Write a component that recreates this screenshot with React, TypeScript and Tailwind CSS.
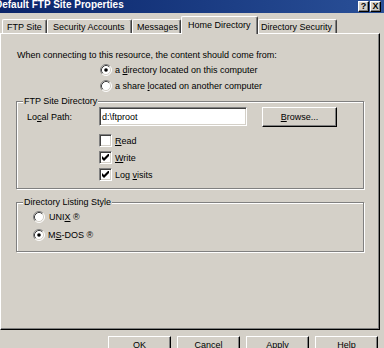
import React from "react";

function Radio({ checked }: { checked?: boolean }) {
  return (
    <svg width="12" height="12" viewBox="0 0 12 12" className="shrink-0">
      <circle cx="6" cy="6" r="5" fill="#fff" />
      <path d="M2.11 9.89A5.5 5.5 0 0 1 9.89 2.11" fill="none" stroke="#808080" />
      <path d="M9.89 2.11A5.5 5.5 0 0 1 2.11 9.89" fill="none" stroke="#fff" />
      <path d="M2.82 9.18A4.5 4.5 0 0 1 9.18 2.82" fill="none" stroke="#404040" />
      <path d="M9.18 2.82A4.5 4.5 0 0 1 2.82 9.18" fill="none" stroke="#d4d0c8" />
      {checked && <circle cx="6" cy="6" r="1.8" fill="#000" />}
    </svg>
  );
}

function Check({ checked }: { checked?: boolean }) {
  return (
    <div className="flex h-[13px] w-[13px] shrink-0 items-center justify-center border border-t-[#808080] border-l-[#808080] border-b-white border-r-white bg-white shadow-[inset_1px_1px_0_#404040,inset_-1px_-1px_0_#d4d0c8]">
      {checked && (
        <svg width="7" height="7" viewBox="0 0 7 7">
          <path d="M0 2L2 4L7 -1L7 2L2 7L0 5Z" fill="#000" />
        </svg>
      )}
    </div>
  );
}

const raised =
  "flex shrink-0 items-center justify-center border border-t-white border-l-white border-b-black border-r-black bg-[#d4d0c8] shadow-[inset_-1px_-1px_0_#808080]";

const bottomBtn =
  "flex h-[22px] w-[63px] shrink-0 items-start justify-center border border-t-white border-l-white border-b-black border-r-black bg-[#d4d0c8] pt-[2px] shadow-[inset_-1px_-1px_0_#808080]";

const tab =
  "flex h-[14px] items-center rounded-t-[2px] border-t border-l border-r border-t-white border-l-white border-r-[#404040] shadow-[inset_-1px_0_0_#808080]";

function U({ children }: { children: React.ReactNode }) {
  return <span className="underline underline-offset-[1px]">{children}</span>;
}

export default function App() {
  return (
    <div className="flex h-[348px] w-[384px] flex-col overflow-hidden bg-[#d4d0c8] font-['Liberation_Sans',Arial,sans-serif] text-[9px] leading-[12px] text-black">
      {/* title bar */}
      <div className="flex h-[13px] shrink-0 items-start justify-between bg-gradient-to-r from-[#0a246a] to-[#2a5098]">
        <span className="-ml-[5px] text-[10px] font-bold leading-[10px] text-white">
          Default FTP Site Properties
        </span>
        <div className="mr-[3px] mt-[1px] flex gap-[1px]">
          <div className={raised + " h-[11px] w-[11px] text-[9px] font-bold leading-none"}>?</div>
          <div className={raised + " h-[11px] w-[11px] text-[9px] font-bold leading-none"}>X</div>
        </div>
      </div>

      {/* tabs */}
      <div className="flex h-[20px] shrink-0 items-end pl-[2px]">
        <div className={tab + " w-[45px] pl-[4px]"}>FTP Site</div>
        <div className={tab + " w-[85px] pl-[5px]"}>Security Accounts</div>
        <div className={tab + " w-[49px] pl-[4px]"}>Messages</div>
        <div className="relative z-10 -mb-[1px] flex h-[18px] w-[77px] items-center rounded-t-[2px] border-t border-l border-r border-t-white border-l-white border-r-[#404040] bg-[#d4d0c8] pb-[1px] pl-[6px] shadow-[inset_-1px_0_0_#808080]">
          Home Directory
        </div>
        <div className={tab + " w-[79px] pl-[2px]"}>Directory Security</div>
      </div>

      {/* panel */}
      <div className="flex h-[297px] w-[380px] shrink-0 flex-col border border-t-white border-l-white border-b-black border-r-black shadow-[inset_-1px_-1px_0_#808080]">
        <p className="ml-[16px] mt-[15px] shrink-0">
          When connecting to this resource, the content should come from:
        </p>
        <div className="ml-[99px] mt-[3px] flex h-[12px] shrink-0 items-center gap-[3px]">
          <Radio checked />
          <span>
            a <U>d</U>irectory located on this computer
          </span>
        </div>
        <div className="ml-[99px] mt-[4px] flex h-[12px] shrink-0 items-center gap-[3px]">
          <Radio />
          <span>
            a share <U>l</U>ocated on another computer
          </span>
        </div>

        <fieldset className="ml-[15px] mt-[3px] h-[94px] w-[348px] shrink-0 border border-[#808080] shadow-[1px_1px_0_#fff,inset_1px_1px_0_#fff]">
          <legend className="ml-[6px] bg-[#d4d0c8] px-[1px] leading-[12px]">FTP Site Directory</legend>
          <div className="flex h-[20px] items-start pl-[10px]">
            <span className="w-[72px] self-center">
              Lo<U>c</U>al Path:
            </span>
            <div className="flex h-[19px] w-[148px] items-center border border-t-[#808080] border-l-[#808080] border-b-white border-r-white bg-white pl-[2px] shadow-[inset_1px_1px_0_#404040,inset_-1px_-1px_0_#d4d0c8]">
              d:\ftproot
            </div>
            <div className={raised + " ml-[15px] h-[20px] w-[75px]"}>
              <span>
                <U>B</U>rowse...
              </span>
            </div>
          </div>
          <div className="ml-[82px] mt-[7px] flex h-[13px] items-center gap-[3px]">
            <Check />
            <span>
              <U>R</U>ead
            </span>
          </div>
          <div className="ml-[82px] mt-[4px] flex h-[13px] items-center gap-[3px]">
            <Check checked />
            <span>
              <U>W</U>rite
            </span>
          </div>
          <div className="ml-[82px] mt-[4px] flex h-[13px] items-center gap-[3px]">
            <Check checked />
            <span>
              Log <U>v</U>isits
            </span>
          </div>
        </fieldset>

        <fieldset className="ml-[15px] mt-[7px] h-[56px] w-[348px] shrink-0 border border-[#808080] shadow-[1px_1px_0_#fff,inset_1px_1px_0_#fff]">
          <legend className="ml-[6px] bg-[#d4d0c8] px-[1px] leading-[12px]">Directory Listing Style</legend>
          <div className="ml-[16px] mt-[3px] flex h-[12px] items-center gap-[4px]">
            <Radio />
            <span>
              UNI<U>X</U> ®
            </span>
          </div>
          <div className="ml-[16px] mt-[6px] flex h-[12px] items-center gap-[3px]">
            <Radio checked />
            <span>
              M<U>S</U>-DOS ®
            </span>
          </div>
        </fieldset>
      </div>

      {/* dialog buttons */}
      <div className="mt-[6px] flex shrink-0 justify-end gap-[6px] pr-[6px]">
        <div className={bottomBtn}>OK</div>
        <div className={bottomBtn}>Cancel</div>
        <div className={bottomBtn}>Apply</div>
        <div className={bottomBtn}>Help</div>
      </div>
    </div>
  );
}
